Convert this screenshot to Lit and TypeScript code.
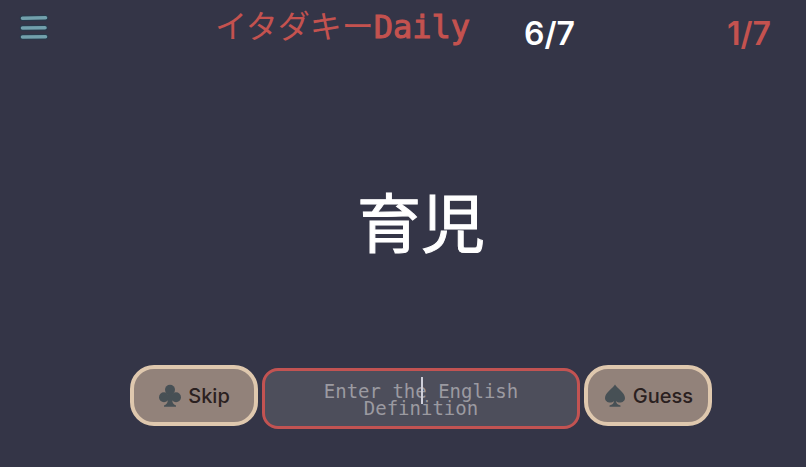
import { LitElement, html, css } from "lit";
import { customElement, state } from "lit/decorators.js";

@customElement("app-root")
export class AppRoot extends LitElement {
  static styles = css`
    :host {
      display: flex;
      flex-direction: column;
      min-height: 100vh;
      box-sizing: border-box;
      padding-bottom: 38px;
      background: #343547;
      color: #fff;
      font-family: Inter, "Noto Sans CJK JP", sans-serif;
    }
    * {
      box-sizing: border-box;
    }
    header {
      display: flex;
      align-items: flex-start;
      padding: 0 35px 0 18px;
    }
    .menu {
      width: 32px;
      height: 32px;
      margin-top: 12px;
      padding: 0;
      border: 0;
      background: none;
    }
    .menu svg {
      display: block;
    }
    .lead {
      flex: 1;
    }
    h1 {
      margin: 0;
      padding-top: 2px;
      font-family: "DejaVu Sans Mono", "Noto Sans CJK JP", monospace;
      font-size: 32px;
      line-height: 44px;
      font-weight: 400;
      color: #c4524f;
      -webkit-text-stroke: 1px #c4524f;
      white-space: nowrap;
    }
    .kana {
      font-family: "Noto Sans CJK JP", sans-serif;
      -webkit-text-stroke: 0;
    }
    .scores {
      flex: 0 1 301px;
      display: flex;
      justify-content: space-between;
      padding: 14px 0 0 54px;
      font-size: 32px;
      line-height: 40px;
      font-weight: 600;
    }
    .misses {
      color: #c4524f;
    }
    main {
      flex: 1;
      display: flex;
      flex-direction: column;
      align-items: center;
      justify-content: space-between;
      padding: 117px 0 0 36px;
    }
    .word {
      font-family: "Noto Sans CJK JP", sans-serif;
      font-size: 64px;
      line-height: 96px;
      font-weight: 400;
      -webkit-text-stroke: 1px #fff;
    }
    form {
      display: flex;
      align-items: center;
      gap: 4px;
      margin: 0;
    }
    .action {
      display: flex;
      align-items: center;
      justify-content: center;
      gap: 6px;
      width: 128px;
      height: 61px;
      padding: 0;
      border: 4px solid #dfc8ae;
      border-radius: 24px;
      background: #92827a;
      color: #2a2020;
      font-family: Inter, sans-serif;
      font-size: 20px;
      font-weight: 500;
    }
    .field {
      position: relative;
      display: flex;
      margin-top: 6px;
    }
    textarea {
      width: 318px;
      height: 61px;
      padding: 12px 8px;
      border: 3px solid #c25352;
      border-radius: 16px;
      outline: 0;
      resize: none;
      overflow: hidden;
      background: #4d4e5b;
      color: #fff;
      text-align: center;
      font-family: "DejaVu Sans Mono", monospace;
      font-size: 19px;
      line-height: 17px;
    }
    textarea::placeholder {
      color: #9b9aa1;
      opacity: 1;
    }
    .caret {
      position: absolute;
      left: 50%;
      top: 9px;
      width: 2px;
      height: 27px;
      background: #d0d0da;
      pointer-events: none;
    }
  `;

  @state() private answer = "";

  render() {
    return html`
      <header>
        <button class="menu" aria-label="Menu">
          <svg width="32" height="32" viewBox="0 0 32 32" fill="none" stroke-linecap="round">
            <path d="M4.500 6.300 27.500 5.700M4.500 16 27 15.700M4.500 25 27.500 24.700" stroke="#263b4c" stroke-width="5.500" />
            <path d="M4.500 6.300 27.500 5.700M4.500 16 27 15.700M4.500 25 27.500 24.700" stroke="#72a0ac" stroke-width="3.600" />
          </svg>
        </button>
        <div class="lead"></div>
        <h1><span class="kana">イタダキー</span>Daily</h1>
        <div class="scores">
          <span>6/7</span>
          <span class="misses">1/7</span>
        </div>
      </header>
      <main>
        <div class="word" lang="ja">育児</div>
        <form @submit=${(e: Event) => e.preventDefault()}>
          <button class="action" type="button">
            <svg width="24" height="24" viewBox="0 0 24 24" fill="#475055" aria-hidden="true">
              <circle cx="12" cy="5.700" r="5" />
              <circle cx="6" cy="13.200" r="5" />
              <circle cx="18" cy="13.200" r="5" />
              <path d="M10 9h4v5c0 4 1 6.500 4 7.500v1.300H6v-1.300c3-1 4-3.500 4-7.500z" />
            </svg>
            Skip
          </button>
          <div class="field">
            <textarea
              aria-label="English definition"
              placeholder="Enter the English Definition"
              .value=${this.answer}
              @input=${(e: Event) => (this.answer = (e.target as HTMLTextAreaElement).value)}
            ></textarea>
            ${this.answer ? "" : html`<span class="caret"></span>`}
          </div>
          <button class="action" type="submit">
            <svg width="24" height="24" viewBox="0 0 24 24" fill="#475055" aria-hidden="true">
              <path
                d="M12 0.500C13.500 4 22 8.500 22 14c0 4.500-6 6-9 3 .3 2.500 1.500 3.800 4.500 4.500v1.300h-11v-1.300c3-.7 4.200-2 4.500-4.500-3 3-9 1.500-9-3C2 8.500 10.500 4 12 .5z"
              />
            </svg>
            Guess
          </button>
        </form>
      </main>
    `;
  }
}
